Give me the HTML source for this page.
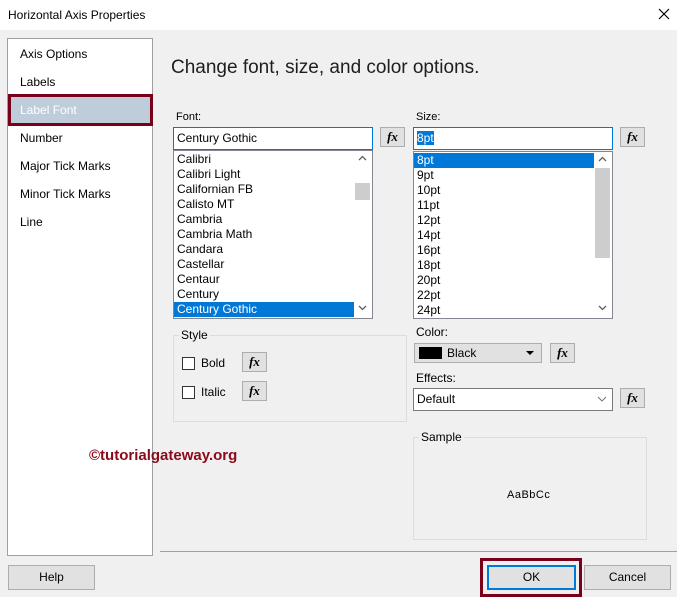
<!DOCTYPE html>
<html><head><style>
*{margin:0;padding:0;box-sizing:border-box}
body{width:677px;height:597px;background:#f0f0f0;font-family:"Liberation Sans",sans-serif;font-size:12px;color:#000;position:relative;overflow:hidden}
.a{position:absolute}
.t{white-space:nowrap}
.fx{position:absolute;width:25px;height:20px;background:#e1e1e1;border:1px solid #adadad;font-family:"Liberation Serif",serif;font-style:italic;font-weight:bold;font-size:13px;text-align:center;line-height:17px}
.list{background:#fff;border:1px solid #828790}
.li{height:15px;line-height:15px;padding-left:3px}
.sel{background:#0078d7;color:#fff}
.btn{position:absolute;height:25px;background:#e1e1e1;border:1px solid #adadad;text-align:center;line-height:23px}
.grp{position:absolute;border:1px solid #dcdcdc}
</style></head><body>
<div class="a" style="left:0;top:0;width:677px;height:30px;background:#fff"></div>
<div class="a t" style="left:8px;top:8px">Horizontal Axis Properties</div>
<svg class="a" style="left:658px;top:8px" width="12" height="12"><path d="M1 1L11 11M11 1L1 11" stroke="#000" stroke-width="1.2"/></svg>

<div class="a" style="left:7px;top:38px;width:146px;height:518px;background:#fff;border:1px solid #a0a0a0"></div>
<div class="a t" style="left:20px;top:47px">Axis Options</div>
<div class="a t" style="left:20px;top:75px">Labels</div>
<div class="a" style="left:8px;top:94px;width:145px;height:32px;background:#bfcddb;border:3px solid #7a0019"></div>
<div class="a t" style="left:20px;top:103px;color:#fff">Label Font</div>
<div class="a t" style="left:20px;top:131px">Number</div>
<div class="a t" style="left:20px;top:159px">Major Tick Marks</div>
<div class="a t" style="left:20px;top:187px">Minor Tick Marks</div>
<div class="a t" style="left:20px;top:215px">Line</div>

<div class="a t" style="left:171px;top:57px;font-size:19px;color:#1e1e1e">Change font, size, and color options.</div>

<div class="a t" style="left:176px;top:111px;font-size:11px">Font:</div>
<div class="a" style="left:173px;top:127px;width:200px;height:23px;background:#fff;border:1px solid #0078d7;padding:3px 0 0 3px">Century Gothic</div>
<div class="fx" style="left:380px;top:127px">fx</div>
<div class="a list" style="left:173px;top:150px;width:200px;height:169px;padding-top:1px">
<div class="li">Calibri</div><div class="li">Calibri Light</div><div class="li">Californian FB</div><div class="li">Calisto MT</div><div class="li">Cambria</div><div class="li">Cambria Math</div><div class="li">Candara</div><div class="li">Castellar</div><div class="li">Centaur</div><div class="li">Century</div><div class="li sel" style="width:180px">Century Gothic</div>
</div>
<div class="a" style="left:355px;top:183px;width:15px;height:17px;background:#cdcdcd"></div>
<svg class="a" style="left:358px;top:155px" width="9" height="6"><path d="M1 5L4.5 1.5L8 5" stroke="#606060" fill="none" stroke-width="1.3"/></svg>
<svg class="a" style="left:358px;top:305px" width="9" height="6"><path d="M1 1L4.5 4.5L8 1" stroke="#606060" fill="none" stroke-width="1.3"/></svg>

<div class="a t" style="left:416px;top:111px;font-size:11px">Size:</div>
<div class="a" style="left:413px;top:127px;width:200px;height:23px;background:#fff;border:1px solid #0078d7;padding:3px 0 0 3px"><span style="background:#0078d7;color:#fff">8pt</span></div>
<div class="fx" style="left:620px;top:127px">fx</div>
<div class="a list" style="left:413px;top:151px;width:200px;height:168px;padding-top:1px">
<div class="li sel" style="width:180px">8pt</div><div class="li">9pt</div><div class="li">10pt</div><div class="li">11pt</div><div class="li">12pt</div><div class="li">14pt</div><div class="li">16pt</div><div class="li">18pt</div><div class="li">20pt</div><div class="li">22pt</div><div class="li">24pt</div>
</div>
<div class="a" style="left:595px;top:168px;width:15px;height:90px;background:#cdcdcd"></div>
<svg class="a" style="left:598px;top:156px" width="9" height="6"><path d="M1 5L4.5 1.5L8 5" stroke="#606060" fill="none" stroke-width="1.3"/></svg>
<svg class="a" style="left:598px;top:305px" width="9" height="6"><path d="M1 1L4.5 4.5L8 1" stroke="#606060" fill="none" stroke-width="1.3"/></svg>

<div class="grp" style="left:173px;top:335px;width:234px;height:87px"></div>
<div class="a t" style="left:179px;top:328px;background:#f0f0f0;padding:0 2px">Style</div>
<div class="a" style="left:182px;top:357px;width:13px;height:13px;background:#fff;border:1px solid #333"></div>
<div class="a t" style="left:201px;top:356px">Bold</div>
<div class="fx" style="left:242px;top:352px">fx</div>
<div class="a" style="left:182px;top:386px;width:13px;height:13px;background:#fff;border:1px solid #333"></div>
<div class="a t" style="left:201px;top:385px">Italic</div>
<div class="fx" style="left:242px;top:381px">fx</div>

<div class="a t" style="left:416px;top:325px">Color:</div>
<div class="a" style="left:414px;top:343px;width:128px;height:20px;background:#e1e1e1;border:1px solid #adadad"></div>
<div class="a" style="left:419px;top:347px;width:23px;height:12px;background:#000"></div>
<div class="a t" style="left:447px;top:346px">Black</div>
<div class="a" style="left:526px;top:351px;width:0;height:0;border-left:4px solid transparent;border-right:4px solid transparent;border-top:4px solid #000"></div>
<div class="fx" style="left:550px;top:343px">fx</div>

<div class="a t" style="left:416px;top:371px">Effects:</div>
<div class="a" style="left:413px;top:388px;width:200px;height:23px;background:#fff;border:1px solid #7a7a7a;padding:3px 0 0 3px">Default</div>
<svg class="a" style="left:597px;top:396px" width="10" height="6"><path d="M1 1L5 5L9 1" stroke="#777" fill="none"/></svg>
<div class="fx" style="left:620px;top:388px">fx</div>

<div class="grp" style="left:413px;top:437px;width:234px;height:103px"></div>
<div class="a t" style="left:419px;top:430px;background:#f0f0f0;padding:0 2px">Sample</div>
<div class="a t" style="left:507px;top:489px;font-size:11px;letter-spacing:0.5px">AaBbCc</div>

<div class="a t" style="left:89px;top:447px;font-size:15px;font-weight:bold;color:#8b0a1a">©tutorialgateway.org</div>

<div class="a" style="left:160px;top:551px;width:517px;height:1px;background:#a0a0a0"></div>
<div class="btn" style="left:8px;top:565px;width:87px">Help</div>
<div class="a" style="left:480px;top:558px;width:102px;height:39px;border:3px solid #7a0019"></div>
<div class="btn" style="left:487px;top:565px;width:89px;border:2px solid #0078d7;line-height:21px">OK</div>
<div class="btn" style="left:584px;top:565px;width:87px">Cancel</div>
</body></html>
